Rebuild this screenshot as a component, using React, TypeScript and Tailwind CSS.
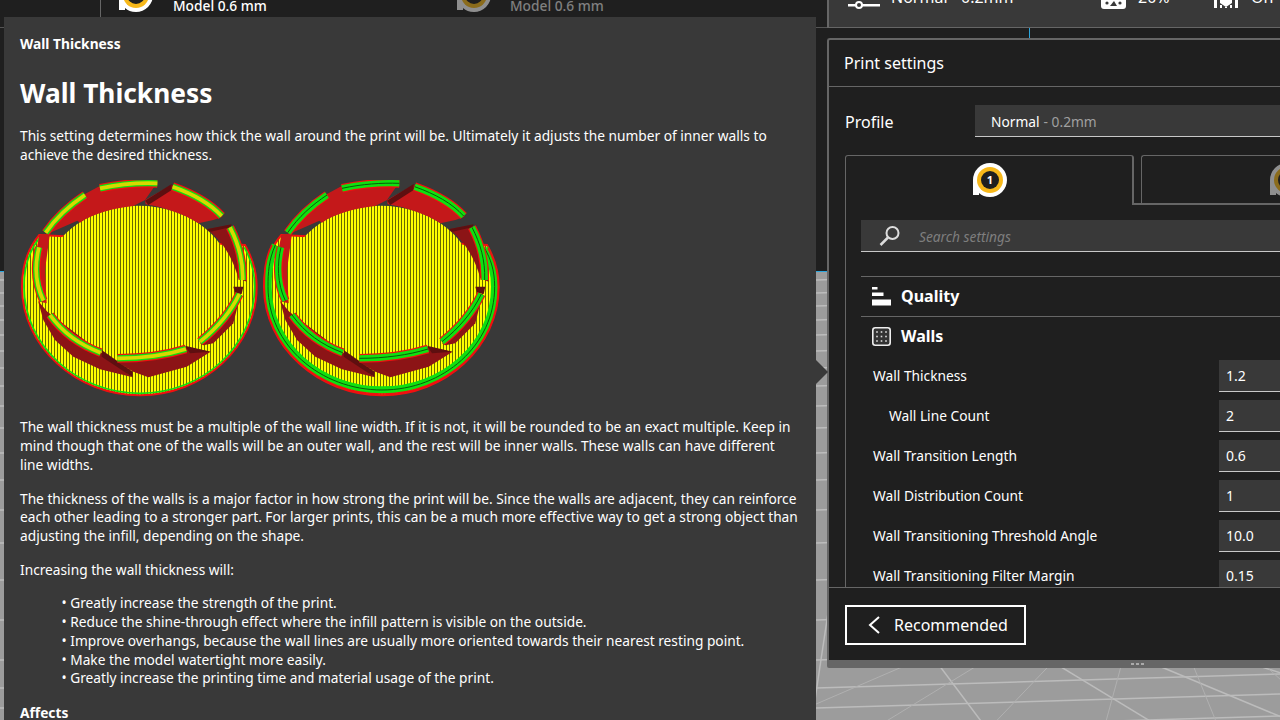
import React from "react";

const rows = [
  { label: "Wall Thickness", value: "1.2", indent: false },
  { label: "Wall Line Count", value: "2", indent: true },
  { label: "Wall Transition Length", value: "0.6", indent: false },
  { label: "Wall Distribution Count", value: "1", indent: false },
  { label: "Wall Transitioning Threshold Angle", value: "10.0", indent: false },
  { label: "Wall Transitioning Filter Margin", value: "0.15", indent: false },
];

const wallSegments = [
  "M300 55 C360 42 420 38 472 40",
  "M137 188 C170 140 210 105 255 75",
  "M518 50 C580 72 630 100 665 138",
  "M690 172 C715 220 730 270 728 330",
  "M117 232 C105 280 105 340 130 392",
  "M150 435 C190 490 240 525 302 548",
  "M352 565 C430 565 500 555 558 537",
  "M718 372 C690 430 650 475 600 515",
];

function Disc({ id, thick }: { id: string; thick: boolean }) {
  return (
    <svg width="240" height="220" viewBox="60 30 720 660" className="shrink-0">
      <defs>
        <pattern id={id} width="9" height="9" patternUnits="userSpaceOnUse">
          <rect width="9" height="9" fill="#ffff00" />
          <rect width="2.4" height="9" fill="#444400" />
        </pattern>
      </defs>
      <path
        d="M118 195 C80 240 66 300 66 350 C66 530 230 676 420 676 C610 676 770 530 770 350 C770 300 755 260 735 225 Z"
        fill={`url(#${id})`}
        stroke="#f01010"
        strokeWidth="6"
      />
      <path
        d={thick
          ? "M100 225 C80 270 78 310 78 350 C78 525 235 660 420 660 C605 660 758 525 758 350 C758 300 745 265 728 235"
          : "M118 205 C85 245 72 300 72 350 C72 528 232 670 420 670 C608 670 764 528 764 350 C764 300 750 262 733 232"}
        fill="none"
        stroke="#10e010"
        strokeWidth={thick ? 22 : 5}
      />
      {thick && (
        <>
          <path
            d="M90 225 C67 270 67 310 67 350 C67 530 230 672 420 672 C610 672 769 530 769 350 C769 300 755 265 738 235"
            fill="none"
            stroke="#f01010"
            strokeWidth="5"
          />
          <path
            d="M100 225 C80 270 78 310 78 350 C78 525 235 660 420 660 C605 660 758 525 758 350 C758 300 745 265 728 235"
            fill="none"
            stroke="#0a5a0a"
            strokeWidth="3"
          />
        </>
      )}
      <ellipse cx="415" cy="335" rx="282" ry="228" fill={`url(#${id})`} />
      <path d="M295 50 L470 40 L435 90 L400 108 C340 115 280 130 240 158 L232 152 L135 195 L255 72 Z" fill="#c4181a" />
      <path d="M515 45 L668 140 L640 150 L595 160 C550 130 490 112 437 103 L435 90 Z" fill="#c4181a" />
      <path d="M435 92 L515 42 L515 60 L445 105 Z" fill="#5e0f10" />
      <path d="M620 178 L690 165 L740 335 L715 325 C700 270 670 215 630 185 Z" fill="#8c1416" />
      <path d="M118 195 L150 190 L135 300 L140 400 L120 395 L98 300 Z" fill="#c4181a" />
      <path d="M114 392 L142 425 L300 545 L398 622 L300 598 L220 560 L165 510 L130 450 Z" fill="#8c1416" />
      <path d="M305 540 L398 605 L398 622 L305 560 Z" fill="#5e0f10" />
      <path d="M350 575 L555 530 L632 545 L560 590 L445 622 L400 605 Z" fill="#8c1416" />
      <path d="M555 527 L632 545 L570 550 Z" fill="#5e0f10" />
      <path d="M600 520 L722 372 L700 460 L640 520 L610 526 Z" fill="#8c1416" />
      <path d="M700 350 L730 350 L725 372 L705 368 Z" fill="#5e0f10" />
      <path d="M620 178 L695 163 L690 172 L632 185 Z" fill="#5e0f10" />
      {wallSegments.map((d) => (
        <g key={d} fill="none">
          <path d={d} stroke="#f01010" strokeWidth="26" />
          <path d={d} stroke="#10e010" strokeWidth="19" />
          {thick ? (
            <path d={d} stroke="#0a5a0a" strokeWidth="3" />
          ) : (
            <path d={d} stroke="#d8d800" strokeWidth="11" />
          )}
        </g>
      ))}
    </svg>
  );
}

function ExtruderBadge({ dim, label }: { dim?: boolean; label?: string }) {
  return (
    <svg width="34" height="34" viewBox="0 0 34 34" className="shrink-0" opacity={dim ? 0.5 : 1}>
      <path d="M0 32 V17 A17 17 0 1 1 17 34 C12 34 9 32.5 6 30 V32 Z" fill="#fff" />
      <circle cx="17" cy="17" r="13" fill="#f7b81a" />
      <circle cx="17" cy="17" r="9" fill="#1f1f1f" />
      {label && (
        <text x="17" y="21" textAnchor="middle" fontSize="11" fontWeight="700" fill="#fff" fontFamily="Noto Sans, sans-serif">
          {label}
        </text>
      )}
    </svg>
  );
}

function Bed() {
  const h = [280, 293, 306, 320, 335, 351, 368, 386, 406, 428, 453, 480, 510, 543, 580, 620, 660, 688, 708, 730, 755];
  const spreadA = [-100, 20, 140, 240, 340, 440, 540, 640, 760];
  const spreadB = [-340, -240, -140, -40, 60, 160, 260];
  return (
    <svg className="absolute left-0 top-[272px]" width="1280" height="448" viewBox="0 272 1280 448">
      <rect x="0" y="272" width="1280" height="448" fill="#9c9c9c" />
      {h.map((y) => (
        <line key={y} x1="816" y1={y} x2="1280" y2={y - 14} stroke="#bcbcbc" strokeWidth="1.5" />
      ))}
      {h.map((y) => (
        <line key={`l${y}`} x1="0" y1={y} x2="4" y2={y} stroke="#bcbcbc" strokeWidth="1.5" />
      ))}
      {spreadA.map((s) => (
        <line key={s} x1="840" y1="533" x2={840 + s * 5 + 400} y2="1200" stroke="#bcbcbc" strokeWidth="1.5" />
      ))}
      {spreadB.map((s) => (
        <line key={`b${s}`} x1="1150" y1="560" x2={1150 + s * 3} y2="1000" stroke="#b0b0b0" strokeWidth="1" />
      ))}
    </svg>
  );
}

function Para({ children }: { children: React.ReactNode }) {
  return <p className="mb-[15px] text-[13.73px] leading-[18.7px] text-white">{children}</p>;
}

export default function App() {
  return (
    <div className="relative h-[720px] w-[1280px] overflow-hidden bg-[#1f1f1f] font-['Noto_Sans',sans-serif] text-white">
      <Bed />

      {/* top dark area */}
      <div className="h-[271px] w-[828px] bg-[#1f1f1f]">
        <div className="ml-[100px] flex h-[27px] border-l border-[#666] pl-[18px]">
          <div className="flex w-[338px] items-start gap-[20px] overflow-hidden">
            <div className="-mt-[22px]"><ExtruderBadge /></div>
            <span className="-mt-[4px] text-[13.75px] font-medium leading-[19px]">Model 0.6 mm</span>
          </div>
          <div className="flex items-start gap-[19px] overflow-hidden">
            <div className="-mt-[22px]"><ExtruderBadge dim /></div>
            <span className="-mt-[4px] text-[13.75px] font-medium leading-[19px] text-[#808080]">Model 0.6 mm</span>
          </div>
        </div>
        <div className="h-px bg-[#555]" />
      </div>
      <div className="h-px w-[828px] bg-[#2ba6de]" />

      {/* right column */}
      <div className="absolute left-[827px] top-0 flex w-[453px] flex-col">
        <div className="flex h-[28px] items-start overflow-hidden border-b border-l-2 border-[#666] bg-[#393939] text-[16px] leading-[22px]">
          <svg width="34" height="12" viewBox="0 0 34 12" className="ml-[19px] shrink-0">
            <rect x="0" y="4" width="32" height="2.5" fill="#fff" />
            <circle cx="11" cy="5" r="3" fill="#393939" stroke="#fff" strokeWidth="2" />
          </svg>
          <span className="-mt-[14px] ml-[9px] w-[210px] shrink-0">Normal - 0.2mm</span>
          <svg width="26" height="10" viewBox="0 0 26 10" className="shrink-0">
            <rect x="0" y="-10" width="25" height="19" rx="3" fill="#fff" />
            <circle cx="6" cy="3" r="1.6" fill="#393939" />
            <circle cx="19" cy="3" r="1.6" fill="#393939" />
            <path d="M9 6 L13 1 L16 6 Z" fill="#393939" />
          </svg>
          <span className="-mt-[14px] ml-[11px] w-[75px] shrink-0">20%</span>
          <svg width="26" height="10" viewBox="0 0 26 10" className="shrink-0">
            <path d="M1 0 H4 V8 H1 Z M22 0 H25 V8 H22 Z M7 3 L13 7 L19 3 V0 H7 Z M7 5 H9 V8 H7 Z M17 5 H19 V8 H17 Z M12 7 H14 V8 H12 Z" fill="#fff" />
          </svg>
          <span className="-mt-[14px] ml-[12px]">On</span>
        </div>
        <div className="h-[10px] pl-[202px]">
          <div className="h-full w-px bg-[#2ba6de]" />
        </div>
        <div className="flex h-[622px] flex-col rounded-tl-[3px] border-l-2 border-t-2 border-[#666] bg-[#1f1f1f]">
          <div className="flex h-[47px] items-center border-b border-[#666] pl-[15px] text-[16px]">Print settings</div>
          <div className="mt-[18px] flex h-[32px] items-center pl-[16px]">
            <span className="w-[130px] translate-y-[1px] text-[16px]">Profile</span>
            <div className="flex h-full flex-1 items-center border-b border-[#c8c8c8] bg-[#393939] pl-[16px] text-[13.75px]">
              <span className="translate-y-[2px]">Normal<span className="ml-[4px] text-[#a0a0a0]">- 0.2mm</span></span>
            </div>
          </div>
          <div className="ml-[16px] mt-[18px] flex h-[50px]">
            <div className="flex w-[289px] shrink-0 items-center justify-center rounded-t-[3px] border-l border-r-2 border-t border-[#666]">
              <div className="translate-x-[1px] -translate-y-[1px]"><ExtruderBadge label="1" /></div>
            </div>
            <div className="min-w-0 flex-1 overflow-hidden border-b-2 border-[#666] pl-[7px]">
              <div className="flex h-full w-[200px] items-center rounded-tl-[3px] border-l border-t border-[#666] pl-[128px]">
                <ExtruderBadge dim />
              </div>
            </div>
          </div>
          <div className="ml-[16px] h-[382px] overflow-hidden border-l border-[#666] pl-[15px] pt-[15px]">
            <div className="flex h-[32px] items-center border-b border-[#c8c8c8] bg-[#393939]">
              <svg width="24" height="24" viewBox="0 0 24 24" className="ml-[17px] shrink-0" fill="none" stroke="#ddd">
                <circle cx="14.5" cy="9" r="6" strokeWidth="2" />
                <line x1="10" y1="13.5" x2="2.5" y2="21" strokeWidth="2.5" />
              </svg>
              <span className="ml-[17px] translate-y-[2px] text-[13.75px] italic text-[#7e7e7e]">Search settings</span>
            </div>
            <div className="mt-[24px] flex h-[40px] items-center gap-[10px] border-t border-[#666] pl-[11px] text-[16px] font-bold">
              <svg width="19" height="19" viewBox="0 0 19 19" className="shrink-0" fill="#fff">
                <rect x="0" y="0" width="5.5" height="2.5" />
                <rect x="0" y="5.5" width="11.5" height="3.5" />
                <rect x="0" y="12.5" width="19" height="6" />
              </svg>
              <span className="-translate-y-[1px]">Quality</span>
            </div>
            <div className="flex h-[40px] items-center gap-[10px] border-t border-[#666] pl-[11px] text-[16px] font-bold">
              <svg width="19" height="19" viewBox="0 0 19 19" className="shrink-0">
                <rect x="0.8" y="0.8" width="17.4" height="17.4" rx="2.5" fill="#333" stroke="#eee" strokeWidth="1.6" />
                {[5, 9.5, 14].map((x) =>
                  [5, 9.5, 14].map((y) => <rect key={`${x}-${y}`} x={x - 0.8} y={y - 0.8} width="1.6" height="1.6" fill="#ddd" />),
                )}
              </svg>
              <span className="-translate-y-[1px]">Walls</span>
            </div>
            {rows.map((r) => (
              <div key={r.label} className="flex h-[40px] items-center text-[13.75px]">
                <span className={r.indent ? "w-[358px] pl-[28px]" : "w-[358px] pl-[12px]"}>{r.label}</span>
                <div className="flex h-[32px] flex-1 items-center border-b border-[#c8c8c8] bg-[#393939] pl-[7px] text-[14px]">{r.value}</div>
              </div>
            ))}
          </div>
          <div className="flex-1 border-t border-[#666] pl-[16px] pt-[17px]">
            <div className="flex h-[40px] w-[181px] items-center border-2 border-white pl-[20px] text-[16px]">
              <svg width="14" height="20" viewBox="0 0 14 20" fill="none" stroke="#fff" strokeWidth="2" className="shrink-0">
                <polyline points="12,2 3,10 12,18" />
              </svg>
              <span className="ml-[13px]">Recommended</span>
            </div>
          </div>
        </div>
        <div className="flex h-[8px] items-center justify-center gap-[2px] rounded-bl-[2px] bg-[#666] pl-[168px]">
          <span className="h-[2px] w-[3px] bg-[#aaa]" />
          <span className="h-[2px] w-[3px] bg-[#aaa]" />
          <span className="h-[2px] w-[3px] bg-[#aaa]" />
        </div>
      </div>

      {/* tooltip overlay */}
      <div className="absolute bottom-0 left-[4px] top-[17px] w-[812px] overflow-hidden bg-[#393939] px-[16px] pt-[17px]">
        <div className="text-[13.75px] font-bold leading-[19px]">Wall Thickness</div>
        <h1 className="mt-[22px] text-[26.3px] font-bold leading-[37px]">Wall Thickness</h1>
        <p className="mt-[15px] text-[13.73px] leading-[18.7px]">
          This setting determines how thick the wall around the print will be. Ultimately it adjusts the number of inner walls to achieve the desired thickness.
        </p>
        <div className="mt-[16px] flex gap-[2px]">
          <Disc id="a" thick={false} />
          <Disc id="b" thick />
        </div>
        <div className="mt-[18px]">
          <Para>
            The wall thickness must be a multiple of the wall line width. If it is not, it will be rounded to be an exact multiple. Keep in mind though that one of the walls will be an outer wall, and the rest will be inner walls. These walls can have different line widths.
          </Para>
          <Para>
            The thickness of the walls is a major factor in how strong the print will be. Since the walls are adjacent, they can reinforce each other leading to a stronger part. For larger prints, this can be a much more effective way to get a strong object than adjusting the infill, depending on the shape.
          </Para>
          <Para>Increasing the wall thickness will:</Para>
          <ul className="mb-[15px] pl-[41.5px] text-[13.73px] leading-[18.75px]">
            <li>• Greatly increase the strength of the print.</li>
            <li>• Reduce the shine-through effect where the infill pattern is visible on the outside.</li>
            <li>• Improve overhangs, because the wall lines are usually more oriented towards their nearest resting point.</li>
            <li>• Make the model watertight more easily.</li>
            <li>• Greatly increase the printing time and material usage of the print.</li>
          </ul>
          <div className="text-[13.75px] font-bold leading-[19px]">Affects</div>
        </div>
      </div>
      {/* tooltip arrow */}
      <div className="absolute left-[816px] top-[360px] h-0 w-0 border-y-[12px] border-l-[12px] border-y-transparent border-l-[#393939]" />
    </div>
  );
}
